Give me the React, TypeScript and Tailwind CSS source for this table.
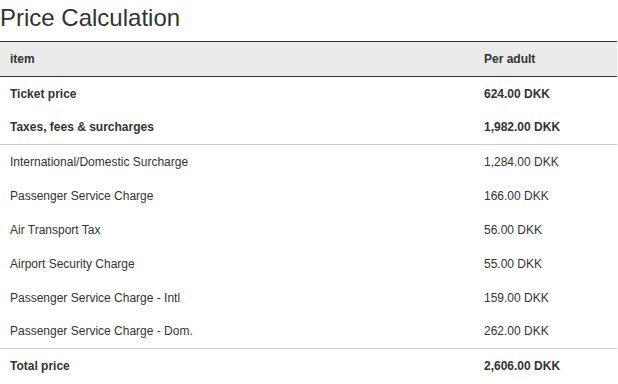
const charges = [
  { label: "International/Domestic Surcharge", amount: "1,284.00 DKK" },
  { label: "Passenger Service Charge", amount: "166.00 DKK" },
  { label: "Air Transport Tax", amount: "56.00 DKK" },
  { label: "Airport Security Charge", amount: "55.00 DKK" },
  { label: "Passenger Service Charge - Intl", amount: "159.00 DKK" },
  { label: "Passenger Service Charge - Dom.", amount: "262.00 DKK" },
];

export default function App() {
  return (
    <div className="w-[618px] h-[384px] overflow-hidden bg-white text-[#333] font-['Liberation_Sans',Arial,sans-serif]">
      <h1 className="text-[24px] leading-[34px] h-[41px] pt-[1px]">Price Calculation</h1>

      <table className="w-[617px] border-collapse text-[12px]">
        <thead>
          <tr className="bg-[#ebebeb] border-y border-[#333]">
            <th className="w-[474px] h-[35px] px-[10px] text-left font-bold">item</th>
            <th className="h-[35px] px-[10px] text-left font-bold">Per adult</th>
          </tr>
        </thead>
        <tbody>
          <tr className="font-bold">
            <td className="h-[34px] px-[10px]">Ticket price</td>
            <td className="h-[34px] px-[10px]">624.00 DKK</td>
          </tr>
          <tr className="font-bold border-b border-[#ccc]">
            <td className="h-[34px] px-[10px]">Taxes, fees &amp; surcharges</td>
            <td className="h-[34px] px-[10px]">1,982.00 DKK</td>
          </tr>
          {charges.map((c, i) => (
            <tr key={c.label} className={i === charges.length - 1 ? "border-b border-[#ccc]" : ""}>
              <td className="h-[34px] px-[10px]">{c.label}</td>
              <td className="h-[34px] px-[10px]">{c.amount}</td>
            </tr>
          ))}
          <tr className="font-bold">
            <td className="h-[34px] px-[10px]">Total price</td>
            <td className="h-[34px] px-[10px]">2,606.00 DKK</td>
          </tr>
        </tbody>
      </table>
    </div>
  );
}
